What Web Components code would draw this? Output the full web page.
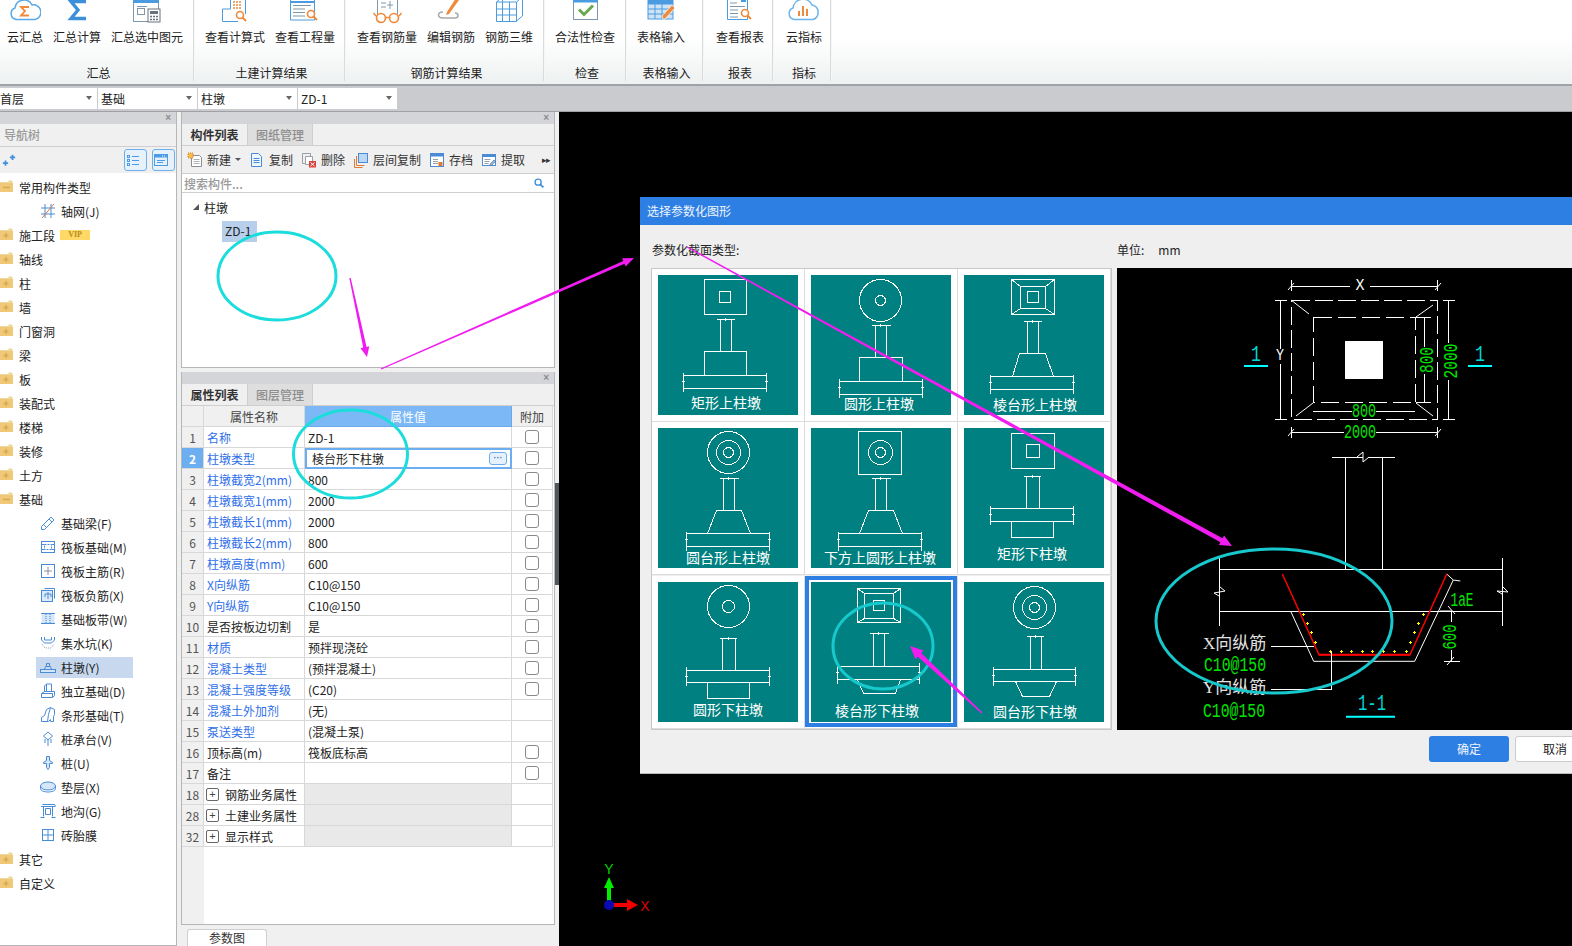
<!DOCTYPE html>
<html lang="zh">
<head>
<meta charset="utf-8">
<title>选择参数化图形</title>
<style>
html, body { margin: 0; height: 100%; overflow: hidden; }
body { background: #f0f0f0; color: #222; font: 12px "Noto Sans CJK SC", sans-serif; }
.main { display: flex; height: 834px; }
.mid { display: flex; flex-direction: column; gap: 4px; width: 374px; margin-left: 4px; }
</style>
</head>
<body>
<app-shell>
  <ribbon-bar>
    <ribbon-group label="汇总" width="195" pad="7">
      <ribbon-button icon="cloudSum" label="云汇总"></ribbon-button>
      <ribbon-button icon="sigma" label="汇总计算"></ribbon-button>
      <ribbon-button icon="winCalc" label="汇总选中图元"></ribbon-button>
    </ribbon-group>
    <ribbon-group label="土建计算结果" width="151" pad="10">
      <ribbon-button icon="formula" label="查看计算式"></ribbon-button>
      <ribbon-button icon="quantity" label="查看工程量"></ribbon-button>
    </ribbon-group>
    <ribbon-group label="钢筋计算结果" width="199" pad="11">
      <ribbon-button icon="glasses" label="查看钢筋量"></ribbon-button>
      <ribbon-button icon="editBar" label="编辑钢筋"></ribbon-button>
      <ribbon-button icon="bar3d" label="钢筋三维"></ribbon-button>
    </ribbon-group>
    <ribbon-group label="检查" width="82" pad="10">
      <ribbon-button icon="check" label="合法性检查"></ribbon-button>
    </ribbon-group>
    <ribbon-group label="表格输入" width="77" pad="10">
      <ribbon-button icon="table" label="表格输入"></ribbon-button>
    </ribbon-group>
    <ribbon-group label="报表" width="70" pad="12">
      <ribbon-button icon="report" label="查看报表"></ribbon-button>
    </ribbon-group>
    <ribbon-group label="指标" width="58" pad="12">
      <ribbon-button icon="cloudBars" label="云指标"></ribbon-button>
    </ribbon-group>
  </ribbon-bar>

  <combo-bar>
    <combo-box width="97" style="--left:0px">首层</combo-box>
    <combo-box width="99">基础</combo-box>
    <combo-box width="99">柱墩</combo-box>
    <combo-box width="99">ZD-1</combo-box>
  </combo-bar>

  <div class="main">
    <nav-panel>
      <tree-row folder="open">常用构件类型</tree-row>
      <tree-row icon="grid">轴网(J)</tree-row>
      <tree-row folder="closed" vip>施工段</tree-row>
      <tree-row folder="closed">轴线</tree-row>
      <tree-row folder="closed">柱</tree-row>
      <tree-row folder="closed">墙</tree-row>
      <tree-row folder="closed">门窗洞</tree-row>
      <tree-row folder="closed">梁</tree-row>
      <tree-row folder="closed">板</tree-row>
      <tree-row folder="closed">装配式</tree-row>
      <tree-row folder="closed">楼梯</tree-row>
      <tree-row folder="closed">装修</tree-row>
      <tree-row folder="closed">土方</tree-row>
      <tree-row folder="open">基础</tree-row>
      <tree-row icon="beam">基础梁(F)</tree-row>
      <tree-row icon="raft">筏板基础(M)</tree-row>
      <tree-row icon="main">筏板主筋(R)</tree-row>
      <tree-row icon="neg">筏板负筋(X)</tree-row>
      <tree-row icon="band">基础板带(W)</tree-row>
      <tree-row icon="pit">集水坑(K)</tree-row>
      <tree-row icon="pier" selected>柱墩(Y)</tree-row>
      <tree-row icon="iso">独立基础(D)</tree-row>
      <tree-row icon="strip">条形基础(T)</tree-row>
      <tree-row icon="cap">桩承台(V)</tree-row>
      <tree-row icon="pile">桩(U)</tree-row>
      <tree-row icon="disc">垫层(X)</tree-row>
      <tree-row icon="trench">地沟(G)</tree-row>
      <tree-row icon="brick">砖胎膜</tree-row>
      <tree-row folder="closed">其它</tree-row>
      <tree-row folder="closed">自定义</tree-row>
    </nav-panel>

    <div class="mid">
      <list-panel></list-panel>
      <prop-panel></prop-panel>
    </div>
    <dock-splitter></dock-splitter>

    <cad-canvas>
      <param-dialog></param-dialog>
    </cad-canvas>
  </div>
  <annot-layer></annot-layer>
</app-shell>

<script>
// small 16px icons for the tree and the list toolbar
const B = '#4a8bd6';
const SMALL = {
  grid: `<path d="M1 5h14M1 11h14M5 1v14M11 1v14" stroke="${B}"/><path d="M2 15L14 1" stroke="#e07a3a"/>`,
  beam: `<path d="M1.5 11.5L11 2l3 3-9.5 9.5h-3z" fill="none" stroke="${B}"/><path d="M3.5 9.5l3 3M9 4l3 3" stroke="${B}"/>`,
  raft: `<rect x="1.5" y="2.5" width="13" height="11" fill="none" stroke="${B}"/><rect x="4.5" y="5.5" width="7" height="5" fill="none" stroke="${B}" stroke-dasharray="2 1"/><path d="M1.5 5.5h3M1.5 10.5h3M11.5 5.5h3M11.5 10.5h3" stroke="${B}"/>`,
  main: `<rect x="1.5" y="1.5" width="13" height="13" fill="none" stroke="${B}"/><path d="M8 4v8M4 8h8" stroke="#8a9099"/>`,
  neg: `<rect x="1.5" y="3.5" width="11" height="11" fill="#dceaf8" stroke="${B}"/><path d="M4.5 1.5h10v10" fill="none" stroke="${B}"/><path d="M5 7h6M5 7v3M8 5v7M11 7v3" stroke="${B}"/>`,
  band: `<rect x="1.5" y="2.5" width="13" height="10" fill="#d5e6f8" stroke="none"/><path d="M1 2.5h14M1 12.5h14" stroke="${B}"/><path d="M6 3v9M10 3v9" stroke="${B}" stroke-dasharray="1 1"/>`,
  pit: `<path d="M1.5 2v3l3 3h7l3-3V2M4.5 2v3h7V2" fill="none" stroke="${B}"/><path d="M2 9l3 4h6l3-4" fill="none" stroke="#9aa3ad" stroke-dasharray="1 1"/>`,
  pier: `<rect x=".5" y="10.5" width="15" height="3" fill="#d5e6f8" stroke="${B}"/><path d="M4.5 10.5l1-3h5l1 3M6.5 7.5v-3h3v3" fill="none" stroke="${B}"/>`,
  iso: `<path d="M1.5 14.5v-4l3-2h10v4l-2 2zM4.5 8.5V3l2-2h5v7.5M6.5 1v7.5M12.5 14.5v-4h-11" fill="none" stroke="${B}"/>`,
  strip: `<path d="M1.5 14.5v-4l3-2 2-6 4-2 4 2v5l-1 2v5h-3v-2l-2 2z" fill="none" stroke="${B}"/><path d="M10.5.5l-2 7-1 7" fill="none" stroke="${B}"/>`,
  cap: `<path d="M8 1l4.5 4-4.5 4-4.5-4zM5 8v4M11 8v4M8 9v6" fill="none" stroke="${B}"/>`,
  pile: `<path d="M6.5 1.5h3v4l3 2v1h-3v4l-1.5 2-1.5-2v-4h-3v-1l3-2z" fill="#d5e6f8" stroke="${B}"/>`,
  disc: `<ellipse cx="8" cy="7" rx="7.5" ry="4" fill="#d5e6f8" stroke="${B}"/><path d="M.5 7v2.5c0 2 3.5 3.5 7.5 3.5s7.5-1.5 7.5-3.5V7" fill="none" stroke="${B}"/>`,
  trench: `<path d="M1 3.5h14M2.5 1.5h12l1 2M3.5 3.5v10M12.5 3.5v10M.5 14.5h4M11.5 14.5h4M5.5 5.5h5v6h-5z" fill="none" stroke="${B}"/>`,
  brick: `<rect x="2.5" y="2.5" width="11" height="11" fill="none" stroke="${B}"/><path d="M8 2.5v11M2.5 8h11" stroke="${B}"/>`,
  fileNew: `<path d="M4.5 3.5h8l2 2v9h-10z" fill="#fff" stroke="#8b8f94"/><path d="M6.5 7.5h6M6.5 9.5h6M6.5 11.5h6" stroke="#aeb2b6"/><rect x="1" y="1" width="5" height="5" fill="#f4c04a" stroke="#e5762d" stroke-dasharray="1 1"/>`,
  fileCopy: `<path d="M2.5 1.5h7l3 3v10h-10z" fill="#eef5fc" stroke="${B}"/><path d="M4.5 6.5h6M4.5 8.5h6M4.5 10.5h6" stroke="${B}"/>`,
  fileDel: `<path d="M1.5 1.5h8v10h-8z" fill="none" stroke="#9aa0a6"/><path d="M4.5 4.5h7v8h-7z" fill="#fff" stroke="#9aa0a6"/><rect x="8" y="9" width="7" height="6.5" fill="#d9413b"/><path d="M9.5 10.5l4 3.5M13.5 10.5l-4 3.5" stroke="#fff"/>`,
  floorCopy: `<rect x="5.5" y="1.5" width="9" height="9" fill="#bcd8f5" stroke="${B}"/><path d="M3.5 4v9.5h8M1.5 7v8.5h8" fill="none" stroke="#e07a3a"/>`,
  store: `<rect x="1.5" y="1.5" width="13" height="13" fill="#fff" stroke="${B}"/><rect x="1.5" y="1.5" width="13" height="3" fill="${B}"/><path d="M4 7.5h5M4 9.5h5M4 11.5h5" stroke="#9aa0a6"/><rect x="9.5" y="10" width="4" height="4" fill="#e5762d"/>`,
  fetch: `<rect x="1.5" y="2.5" width="13" height="11" fill="#fff" stroke="${B}"/><rect x="1.5" y="2.5" width="13" height="2.5" fill="${B}"/><path d="M3.5 7.5h6M3.5 9.5h5M3.5 11.5h4" stroke="#9aa0a6"/><path d="M9 12l4-4 1.5 1.5-4 4H9z" fill="#8fb8e6" stroke="#5b6b7a" stroke-width=".6"/>`,
  search: `<circle cx="7" cy="7" r="3.5" fill="none" stroke="#3c8fd8" stroke-width="1.5"/><path d="M9.5 9.5L13 13" stroke="#3c8fd8" stroke-width="2"/>`,
  list: `<rect x="2.5" y="3.5" width="2" height="2" fill="none" stroke="#4b9be8"/><rect x="2.5" y="7.5" width="2" height="2" fill="none" stroke="#4b9be8"/><rect x="2.5" y="11.5" width="2" height="2" fill="none" stroke="#4b9be8"/><path d="M7 4.5h7M7 8.5h7M7 12.5h7" stroke="#4b9be8"/>`,
  winBox: `<rect x="1.5" y="2.5" width="13" height="11" fill="none" stroke="#4b9be8"/><rect x="1.5" y="2.5" width="13" height="3" fill="#4b9be8"/><path d="M4 8.5h8M4 10.5h6" stroke="#4b9be8"/><path d="M9 4h1M11 4h1" stroke="#fff"/>`,
  wand: `<path d="M1 11.5h6M4 8.5v6" stroke="#3c8fd8" stroke-width="2"/><path d="M9 5h6M12 2v6" stroke="#3c8fd8" stroke-width="2"/>`
};
const small = (name, size = 16) => `<svg width="${size}" height="${size}" viewBox="0 0 16 16" style="display:block;flex:none">${SMALL[name]}</svg>`;

// ribbon icons: 32x24 box whose top is cut off by the window, as in the app
const Or = '#ef8a3c', Bl = '#4b9be0', Gy = '#7f97ac';
const lens = (x, y) => `<circle cx="${x}" cy="${y}" r="3.5" fill="#fff" stroke="${Or}" stroke-width="1.6"/><path d="M${x + 2.5} ${y + 2.5}l3.5 3.5" stroke="${Or}" stroke-width="2"/>`;
const RIBBON = {
  cloudSum: `<path d="M7 19.5a6 6 0 0 1-1-11.5 9 9 0 0 1 17-3 7 7 0 0 1 3 14.5z" fill="none" stroke="#5aa9e6" stroke-width="1.5"/><path d="M20 7h-8l4 4-4 4.5h8" fill="none" stroke="${Or}" stroke-width="1.8"/>`,
  sigma: `<path d="M25 1.5H10l7 8.5-7 8.5h15" fill="none" stroke="#3c8fd8" stroke-width="3.4"/>`,
  winCalc: `<rect x="2.5" y="-3" width="25" height="24.5" fill="#fff" stroke="${Gy}"/><rect x="2" y="0" width="26" height="3" fill="${Bl}"/><rect x="6.5" y="8.5" width="7" height="6" fill="none" stroke="${Gy}"/><path d="M6 6.5h10" stroke="${Gy}"/><rect x="17" y="9" width="12" height="13" fill="#fff" stroke="#6a737b"/><rect x="19" y="11" width="8" height="3" fill="#6a737b"/><path d="M19 16.5h8M19 19.5h8" stroke="#6a737b" stroke-width="1.5" stroke-dasharray="2 1"/>`,
  formula: `<path d="M3.5 21.5V9h8V-3h15v17" fill="none" stroke="${Bl}"/><path d="M3.5 21.5H19" stroke="${Bl}"/><path d="M14 2h9M14 5h9M14 8h9" stroke="${Or}" stroke-dasharray="2 1" stroke-width="1.5"/>${lens(21, 15)}`,
  quantity: `<path d="M1.5-3h24v23h-24z" fill="#fff" stroke="${Bl}"/><path d="M1 2h25" stroke="${Bl}" stroke-width="2"/><path d="M4 5.5h18M4 9h12M4 12.5h12M4 16h12" stroke="${Gy}"/>${lens(22, 14)}`,
  glasses: `<path d="M6.5 14V-3h20v17" fill="none" stroke="${Gy}"/><path d="M10 3h5M10 7h5M19 1v8M16 5h6" stroke="${Gy}"/><circle cx="10" cy="18" r="4.5" fill="#fff" stroke="${Or}" stroke-width="1.7"/><circle cx="23" cy="18" r="4.5" fill="#fff" stroke="${Or}" stroke-width="1.7"/><path d="M14.500 17.5h4M5 16L2.500 13M28 16l2.500-3" stroke="${Or}" stroke-width="1.5"/>`,
  editBar: `<path d="M12 12L21-2l3 2-10 14-3 1z" fill="${Or}"/><path d="M8 12c-6 0-6 6 0 6h12c4 0 4-5 0-5" fill="none" stroke="#a7a9ab" stroke-width="1.5"/>`,
  bar3d: `<path d="M3.5 21.5V2l6-5M3.5 21.5h20V2M3.5 2h20l6-5M9.5-3v19M3.5 9h20M3.5 15h20M9.5 3v18M16.5 2v19M29.5-3V16l-6 5" fill="none" stroke="${Bl}"/>`,
  check: `<rect x="4.5" y="-2" width="24" height="21.5" fill="#fff" stroke="${Gy}"/><rect x="4" y="0" width="25" height="2.5" fill="${Bl}"/><path d="M10 9.5l5 5 9-9" fill="none" stroke="#6aa84f" stroke-width="3"/>`,
  table: `<rect x="3" y="-1" width="25" height="20" fill="#cfe3f7" stroke="${Bl}"/><path d="M3 4h25M3 9h25M3 14h25M10 0v19M17 0v19" stroke="${Bl}"/><rect x="3" y="-1" width="25" height="5" fill="${Bl}"/><path d="M18 19l-1-3L27 5l3 3-10 11z" fill="${Or}" stroke="#fff" stroke-width=".7"/>`,
  report: `<path d="M3.5-3h20v22.5h-20z" fill="#fff" stroke="${Bl}"/><path d="M6 3h7M6 6.500h15M6 10h8M6 13.500h8M6 17h8" stroke="${Gy}"/><rect x="17" y="-3" width="5" height="5" fill="${Bl}"/>${lens(21, 13)}`,
  cloudBars: `<path d="M6 19.5a6 6 0 0 1-1-11.5 10 10 0 0 1 19-3 7.5 7.5 0 0 1 1 14.5z" fill="none" stroke="#6bb5ec" stroke-width="1.5"/><path d="M11 11v5M15 6v10M19 9v7" stroke="${Or}" stroke-width="2"/>`
};

class AppShell extends HTMLElement {
  constructor() {
    super();
    this.attachShadow({ mode: 'open' }).innerHTML = `
      <style>:host{display:block;position:relative;width:1572px;height:946px;overflow:hidden}</style>
      <slot></slot>`;
  }
}

class RibbonBar extends HTMLElement {
  constructor() {
    super();
    this.attachShadow({ mode: 'open' }).innerHTML = `
      <style>
      :host{display:flex;height:84px;background:linear-gradient(#fff 0,#fff 45%,#eef1f1 100%);border-bottom:2px solid #9fa3a7;overflow:hidden}
      </style><slot></slot>`;
  }
}

class RibbonGroup extends HTMLElement {
  connectedCallback() {
    if (this.shadowRoot) return;
    const w = this.getAttribute('width'), pad = this.getAttribute('pad');
    this.attachShadow({ mode: 'open' }).innerHTML = `
      <style>
      :host{display:block;position:relative;box-sizing:border-box;width:${w}px;height:84px;flex:none}
      .btns{display:flex;gap:10px;padding-left:${pad}px}
      .name{position:absolute;left:2px;right:0;top:64px;line-height:17px;text-align:center;color:#222}
      .sep{position:absolute;right:0;top:0;height:81px;width:2px;background:#d9dbdc;border-right:1px solid #f5f6f6;box-sizing:border-box}
      </style>
      <div class="btns"><slot></slot></div>
      <div class="name">${this.getAttribute('label')}</div>
      <div class="sep"></div>`;
  }
}

class RibbonButton extends HTMLElement {
  connectedCallback() {
    if (this.shadowRoot) return;
    this.attachShadow({ mode: 'open' }).innerHTML = `
      <style>
      :host{display:flex;flex-direction:column;align-items:center;white-space:nowrap}
      svg{display:block;overflow:hidden}
      .t{margin-top:5px;line-height:16px;color:#222}
      </style>
      <svg width="32" height="24" viewBox="0 0 32 24">${RIBBON[this.getAttribute('icon')]}</svg>
      <div class="t">${this.getAttribute('label')}</div>`;
  }
}

class ComboBar extends HTMLElement {
  constructor() {
    super();
    this.attachShadow({ mode: 'open' }).innerHTML = `
      <style>
      :host{display:flex;gap:1px;align-items:center;box-sizing:border-box;height:26px;background:#c9cbce;border-bottom:1px solid #9fa1a4;padding-bottom:1px}
      </style><slot></slot>`;
  }
}

class ComboBox extends HTMLElement {
  connectedCallback() {
    if (this.shadowRoot) return;
    this.attachShadow({ mode: 'open' }).innerHTML = `
      <style>
      :host{display:flex;align-items:center;justify-content:space-between;box-sizing:border-box;width:${this.getAttribute('width')}px;height:21px;padding:0 5px 0 var(--left,3px);background:#fff;color:#222}
      i{width:0;height:0;border:3px solid transparent;border-top:4px solid #666;border-bottom:0}
      </style><slot></slot><i></i>`;
  }
}

class DockPanel extends HTMLElement {
  constructor() {
    super();
    this.attachShadow({ mode: 'open' }).innerHTML = `
      <style>
      :host{display:flex;flex-direction:column;box-sizing:border-box;border:1px solid #b4b6b8;border-top:0;background:#fff;min-height:0}
      .bar{display:flex;justify-content:flex-end;align-items:center;flex:none;height:12px;background:#d3d5d8;padding-right:5px;color:#8a8c8f;font:bold 10px/12px "Liberation Sans",sans-serif}
      </style>
      <div class="bar">×</div><slot></slot>`;
  }
}

class TabStrip extends HTMLElement {
  connectedCallback() {
    if (this.shadowRoot) return;
    const tabs = this.getAttribute('items').split(',');
    this.attachShadow({ mode: 'open' }).innerHTML = `
      <style>
      :host{display:flex;flex:none;height:22px;box-sizing:border-box;background:#f0f0f0;border-bottom:1px solid #cfcfcf}
      div{display:flex;align-items:center;justify-content:center;width:64px;height:21px;border-right:1px solid #cfcfcf;background:#dedede;color:#8e8e8e;font-weight:500}
      div.on{background:#f0f0f0;color:#333;width:65px;font-weight:700}
      </style>
      ${tabs.map((t, i) => `<div class="${i ? '' : 'on'}">${t}</div>`).join('')}`;
  }
}

class TreeRow extends HTMLElement {
  connectedCallback() {
    if (this.shadowRoot) return;
    const folder = this.getAttribute('folder');
    const mark = folder === 'open'
      ? `<path d="M3 7.5h7" stroke="#d9a94e" stroke-width="1.5"/>`
      : `<path d="M3.5 7.5h5M6 5v5" stroke="#d9a94e" stroke-width="1.5"/>`;
    const icon = folder
      ? `<svg width="14" height="14" viewBox="0 0 14 14" style="display:block;flex:none"><path d="M0 2h8l1-1.5h3.500V12H0z" fill="#f1d79c"/><rect x="0" y="3" width="13" height="9" fill="#efc878"/>${mark}</svg>`
      : small(this.getAttribute('icon'));
    const vip = this.hasAttribute('vip') ? '<span class="vip">VIP</span>' : '';
    this.attachShadow({ mode: 'open' }).innerHTML = `
      <style>
      :host{display:flex;align-items:center;height:24px;white-space:nowrap;color:#222}
      .in{display:flex;align-items:center;gap:5px;height:21px;box-sizing:border-box}
      :host([icon]) .in{margin-left:36px;padding-left:4px;width:97px}
      :host([selected]) .in{background:#c7d8ef}
      .vip{width:30px;height:10px;background:#ffd966;color:#b68a1e;font:bold 8px/10px "Liberation Serif",serif;text-align:center}
      </style>
      <div class="in">${icon}<slot></slot>${vip}</div>`;
  }
}

class NavPanel extends HTMLElement {
  constructor() {
    super();
    this.attachShadow({ mode: 'open' }).innerHTML = `
      <style>
      :host{display:block;flex:none;width:177px}
      dock-panel{height:100%;border-left:0}
      .head{flex:none;height:22px;line-height:21px;padding-left:4px;color:#9a9a9a;background:#f0f0f0;border-bottom:1px solid #cfcfcf;font-weight:500}
      .tools{display:flex;align-items:center;gap:5px;flex:none;height:26px;box-sizing:border-box;padding:0 1px 0 2px;background:#f0f0f0}
      .tools svg:first-child{margin-right:auto}
      .tb{width:21px;height:20px;border:1px solid #6cb0ee;border-radius:3px;background:#e6f1fb;display:flex;align-items:center;justify-content:center;box-sizing:content-box}
      .tree{padding-top:2px;overflow:hidden;flex:1}
      </style>
      <dock-panel>
        <div class="head">导航树</div>
        <div class="tools">${small('wand', 14)}<span class="tb">${small('list')}</span><span class="tb">${small('winBox')}</span></div>
        <div class="tree"><slot></slot></div>
      </dock-panel>`;
  }
}

class ToolButton extends HTMLElement {
  connectedCallback() {
    if (this.shadowRoot) return;
    const arrow = this.hasAttribute('menu') ? '<i></i>' : '';
    this.attachShadow({ mode: 'open' }).innerHTML = `
      <style>
      :host{display:flex;align-items:center;gap:4px;white-space:nowrap;color:#333}
      i{width:0;height:0;border:3px solid transparent;border-top:3px solid #555;border-bottom:0}
      </style>${small(this.getAttribute('icon'))}<slot></slot>${arrow}`;
  }
}

class ListPanel extends HTMLElement {
  constructor() {
    super();
    this.attachShadow({ mode: 'open' }).innerHTML = `
      <style>
      :host{display:block;flex:none;height:256px}
      dock-panel{height:100%}
      .tools{display:flex;align-items:center;gap:8px;flex:none;height:28px;box-sizing:border-box;padding-left:5px;background:#f0f0f0;border-bottom:1px solid #cfcfcf;position:relative}
      .more{position:absolute;right:4px;top:9px;font:9px/10px "Liberation Sans",sans-serif;color:#333;letter-spacing:-1px}
      .search{display:flex;align-items:center;justify-content:space-between;flex:none;height:19px;box-sizing:border-box;padding:0 8px 0 2px;color:#9a9a9a;border-bottom:1px solid #cfcfcf;font-weight:500}
      .tree{position:relative;flex:1;padding:5px 0 0 11px}
      .row{display:flex;align-items:center;gap:5px;height:18px}
      .row i{width:0;height:0;border-style:solid;border-width:0 0 6px 6px;border-color:transparent transparent #555 transparent}
      .sel{display:block;margin:5px 0 0 29px;width:35px;height:21px;line-height:20px;text-indent:3px;background:#b8cfec}
      </style>
      <dock-panel>
        <tab-strip items="构件列表,图纸管理"></tab-strip>
        <div class="tools">
          <tool-button icon="fileNew" menu>新建</tool-button>
          <tool-button icon="fileCopy">复制</tool-button>
          <tool-button icon="fileDel">删除</tool-button>
          <tool-button icon="floorCopy">层间复制</tool-button>
          <tool-button icon="store">存档</tool-button>
          <tool-button icon="fetch">提取</tool-button>
          <span class="more">▸▸</span>
        </div>
        <div class="search"><span>搜索构件...</span>${small('search', 14)}</div>
        <div class="tree">
          <div class="row"><i></i><span>柱墩</span></div>
          <span class="sel">ZD-1</span>
        </div>
      </dock-panel>`;
  }
}

const PROPS = [
  [1, '名称', 'ZD-1', 1, 1],
  [2, '柱墩类型', '棱台形下柱墩', 1, 1],
  [3, '柱墩截宽2(mm)', '800', 1, 1],
  [4, '柱墩截宽1(mm)', '2000', 1, 1],
  [5, '柱墩截长1(mm)', '2000', 1, 1],
  [6, '柱墩截长2(mm)', '800', 1, 1],
  [7, '柱墩高度(mm)', '600', 1, 1],
  [8, 'X向纵筋', 'C10@150', 1, 1],
  [9, 'Y向纵筋', 'C10@150', 1, 1],
  [10, '是否按板边切割', '是', 0, 1],
  [11, '材质', '预拌现浇砼', 1, 1],
  [12, '混凝土类型', '(预拌混凝土)', 1, 1],
  [13, '混凝土强度等级', '(C20)', 1, 1],
  [14, '混凝土外加剂', '(无)', 1, 0],
  [15, '泵送类型', '(混凝土泵)', 1, 0],
  [16, '顶标高(m)', '筏板底标高', 0, 1],
  [17, '备注', '', 0, 1]
];
const GROUPS = [[18, '钢筋业务属性'], [28, '土建业务属性'], [32, '显示样式']];

class PropPanel extends HTMLElement {
  constructor() {
    super();
    const row = ([n, name, val, link, chk]) => `
      <div class="c no ${n === 2 ? 'cur' : ''}">${n}</div>
      <div class="c nm ${link ? 'link' : ''}">${name}</div>
      <div class="c val ${n === 2 ? 'edit' : ''}"><span>${val}</span>${n === 2 ? '<b>···</b>' : ''}</div>
      <div class="c add">${chk ? '<u></u>' : ''}</div>`;
    const group = ([n, name]) => `
      <div class="c no">${n}</div>
      <div class="c nm grp"><em>+</em>${name}</div>
      <div class="c val fill"></div>
      <div class="c add"></div>`;
    this.attachShadow({ mode: 'open' }).innerHTML = `
      <style>
      :host{display:flex;flex-direction:column;flex:none;height:574px}
      dock-panel{height:553px;flex:none}
      .body{flex:1;background:linear-gradient(90deg,#f0f0f0 22px,#fff 22px)}
      .grid{display:grid;grid-template-columns:22px 101px 207px 41px;grid-auto-rows:21px}
      .c{box-sizing:border-box;display:flex;align-items:center;border-right:1px solid #d8d8d8;border-bottom:1px solid #d8d8d8;background:#fff;white-space:nowrap;padding-left:3px;color:#222}
      .h{justify-content:center;padding:0;background:#f0f0f0;color:#444}
      .h.v{background:#7cb8f6;color:#fff;border-color:#6aa8ea}
      .no{justify-content:center;padding:0;background:#f0f0f0;color:#555}
      .no.cur{background:#6daef0;color:#fff;font-weight:700}
      .link{color:#2f6fe8}
      .edit{border:2px solid #6daef0;padding-left:5px;justify-content:space-between;padding-right:3px}
      .edit b{display:block;width:16px;height:11px;border:1px solid #6daef0;border-radius:3px;background:#e6f1fb;color:#3f7fc8;font:bold 9px/10px "Liberation Sans",sans-serif;text-align:center}
      .add{justify-content:center;padding:0}
      u{display:block;width:12px;height:12px;border:1px solid #8a8a8a;border-radius:3px;text-decoration:none}
      .grp{padding-left:2px}
      em{display:block;width:11px;height:11px;border:1px solid #666;border-radius:2px;margin-right:6px;font:normal 11px/10px "Liberation Sans",sans-serif;text-align:center;color:#444}
      .fill{background:#e9e9e9}
      .tabs{flex:none;padding:4px 0 0 6px}
      .tabs div{width:80px;height:17px;box-sizing:border-box;border:1px solid #cfcfcf;border-bottom:0;border-radius:3px 3px 0 0;background:#fff;text-align:center;line-height:16px;color:#333}
      </style>
      <dock-panel>
        <tab-strip items="属性列表,图层管理"></tab-strip>
        <div class="body"><div class="grid">
          <div class="c h"></div><div class="c h">属性名称</div><div class="c h v">属性值</div><div class="c h">附加</div>
          ${PROPS.map(row).join('')}${GROUPS.map(group).join('')}
        </div></div>
      </dock-panel>
      <div class="tabs"><div>参数图</div></div>`;
  }
}

class DockSplitter extends HTMLElement {
  constructor() {
    super();
    this.attachShadow({ mode: 'open' }).innerHTML = `
      <style>
      :host{display:flex;flex:none;width:4px;padding-top:371px;box-sizing:border-box}
      div{width:4px;height:102px;background:#50565c}
      </style><div></div>`;
  }
}

class CadCanvas extends HTMLElement {
  constructor() {
    super();
    this.attachShadow({ mode: 'open' }).innerHTML = `
      <style>
      :host{display:block;position:relative;flex:1;min-width:0;background:#000;overflow:hidden}
      svg{position:absolute;left:30px;top:745px}
      ::slotted(*){position:absolute;left:81px;top:85px}
      </style>
      <svg width="70" height="60" viewBox="0 0 70 60">
        <path d="M18 28h4v20h-4z" fill="#00f000"/><path d="M20 20l5 11H15z" fill="#00f000"/>
        <path d="M20 46h24v4H20z" fill="#f00000"/><path d="M38 42l11 6-11 6z" fill="#f00000"/>
        <circle cx="20" cy="48" r="5" fill="#0a0ab4"/>
        <text x="20" y="17" text-anchor="middle" font-family="Liberation Sans" font-size="14" fill="#00d000">Y</text>
        <text x="56" y="54" text-anchor="middle" font-family="Liberation Sans" font-size="14" fill="#e00000">X</text>
      </svg>
      <slot></slot>`;
  }
}

// teal tiles: measured in tile pixels
const TILES = [
  { label: '矩形上柱墩', lx: 68, ly: 127, rects: [[46, 88, 4, 39], [61, 72, 16, 27]], col: [44, 58, 76, 62, 73, 76], base: [46, 88, 46, 88, 76, 100], slab: [100, 113, 25, 108, 97, 116] },
  { label: '圆形上柱墩', lx: 68, ly: 128, circles: [[69, 25, 21], [69, 25, 5]], col: [50, 60, 79, 64, 75, 82], base: [48, 91, 48, 91, 82, 106], slab: [106, 119, 28, 111, 103, 122] },
  { label: '棱台形上柱墩', lx: 71, ly: 129, rects: [[47, 90, 4, 39], [56, 81, 11, 33], [63, 74, 16, 27]], diag: 1, col: [46, 59, 77, 63, 74, 78], base: [55, 81, 48, 89, 78, 101], slab: [101, 114, 26, 109, 99, 118] },
  { label: '圆台形上柱墩', lx: 70, ly: 129, circles: [[70, 24, 21], [70, 24, 12], [70, 24, 5]], col: [50, 61, 80, 65, 76, 82], base: [58, 83, 49, 92, 82, 105], slab: [105, 118, 28, 111, 103, 122] },
  { label: '下方上圆形上柱墩', lx: 69, ly: 129, rects: [[47, 90, 3, 46]], circles: [[69, 24, 12], [69, 24, 5]], col: [50, 60, 79, 64, 75, 82], base: [57, 82, 48, 91, 82, 105], slab: [105, 118, 27, 110, 103, 122] },
  { label: '矩形下柱墩', lx: 68, ly: 125, rects: [[47, 90, 5, 40], [62, 75, 16, 29]], col: [48, 59, 76, 62, 75, 80], slab: [80, 93, 26, 109, 77, 96], base: [47, 89, 47, 89, 93, 109] },
  { label: '圆形下柱墩', lx: 70, ly: 127, circles: [[70, 24, 21], [70, 24, 6]], col: [56, 61, 78, 64, 77, 88], slab: [88, 100, 28, 111, 84, 103], base: [49, 91, 49, 91, 100, 116] },
  { label: '棱台形下柱墩', lx: 66, ly: 128, rects: [[46, 89, 6, 40], [53, 82, 11, 36], [62, 73, 18, 28]], diag: 1, col: [51, 58, 77, 62, 73, 84], slab: [84, 97, 26, 108, 80, 101], base: [46, 89, 52, 84, 97, 111], selected: 1 },
  { label: '圆台形下柱墩', lx: 71, ly: 129, circles: [[70, 25, 21], [70, 25, 12], [70, 25, 5]], col: [54, 62, 79, 66, 77, 87], slab: [87, 99, 29, 111, 84, 103], base: [51, 92, 58, 85, 99, 114] }
];

function tileShapes(t) {
  const p = v => v + .5;
  let d = '', out = '';
  (t.rects || []).forEach(([x0, x1, y0, y1]) => { d += `M${p(x0)} ${p(y0)}H${p(x1)}V${p(y1)}H${p(x0)}Z`; });
  (t.circles || []).forEach(([cx, cy, r]) => { out += `<circle cx="${p(cx)}" cy="${p(cy)}" r="${r}"/>`; });
  if (t.diag) {
    const a = t.rects[0], b = t.rects[1];
    d += `M${p(a[0])} ${p(a[2])}L${p(b[0])} ${p(b[2])}M${p(a[1])} ${p(a[2])}L${p(b[1])} ${p(b[2])}M${p(a[0])} ${p(a[3])}L${p(b[0])} ${p(b[3])}M${p(a[1])} ${p(a[3])}L${p(b[1])} ${p(b[3])}`;
  }
  const [y, x0, x1, c0, c1, yb] = t.col;
  d += `M${p(x0)} ${p(y)}H${p(x1)}M${p(c0)} ${p(y)}V${p(yb)}M${p(c1)} ${p(y)}V${p(yb)}M${p((c0 + c1) >> 1)} ${y - 1}v3`;
  const [s0, s1, sx0, sx1, v0, v1] = t.slab;
  const m = (s0 + s1) >> 1;
  d += `M${p(sx0)} ${p(s0)}H${p(sx1)}M${p(sx0)} ${p(s1)}H${p(sx1)}M${p(sx0)} ${p(v0)}V${p(v1)}M${p(sx1)} ${p(v0)}V${p(v1)}M${sx0 - 1} ${p(m)}h3M${sx1 - 1} ${p(m)}h3`;
  const [t0, t1, b0, b1, by0, by1] = t.base;
  d += `M${p(t0)} ${p(by0)}L${p(b0)} ${p(by1)}H${p(b1)}L${p(t1)} ${p(by0)}Z`;
  return `<path d="${d}"/>${out}`;
}

class ParamTile extends HTMLElement {
  connectedCallback() {
    if (this.shadowRoot) return;
    const t = TILES[+this.getAttribute('index')];
    this.attachShadow({ mode: 'open' }).innerHTML = `
      <style>
      :host{display:block;position:relative;box-sizing:border-box;width:153px;height:153px;padding:6px 0 0 6px;background:#fff;border-right:1px solid #dcdcdc;border-bottom:1px solid #dcdcdc}
      .mark{position:absolute;left:0;top:0;width:152px;height:151px;box-sizing:border-box;border:4px solid #2e7fe3}
      svg{display:block;background:#008080}
      g{fill:none;stroke:#fff;stroke-width:1;shape-rendering:crispEdges}
      text{fill:#fff;font:14px "Noto Sans CJK SC",sans-serif;text-anchor:middle;dominant-baseline:central}
      </style>
      <svg width="140" height="140" viewBox="0 0 140 140"><g>${tileShapes(t)}</g><text x="${t.lx}" y="${t.ly}">${t.label}</text></svg>
      ${t.selected ? '<div class="mark"></div>' : ''}`;
  }
}

class SectionPreview extends HTMLElement {
  constructor() {
    super();
    const dots = [[1303, 614], [1307, 623], [1311, 632], [1315, 642], [1330, 651], [1341, 651], [1351, 651], [1362, 651], [1372, 651], [1383, 651], [1394, 651], [1406, 651], [1410, 642], [1414, 632], [1418, 623], [1423, 614]]
      .map(([x, y]) => `M${x - 1} ${y + .5}h3M${x + .5} ${y - 1}v3`).join('');
    const mono = (x, y, s, len, cls, rot) => `<text class="${cls}" x="${x}" y="${y}" textLength="${len}" lengthAdjust="spacingAndGlyphs" ${rot ? `transform="rotate(-90 ${x} ${y})"` : ''}>${s}</text>`;
    this.attachShadow({ mode: 'open' }).innerHTML = `
      <style>
      :host{display:block;flex:none;width:470px;height:462px;background:#000}
      svg{display:block}
      .w{fill:none;stroke:#fff;stroke-width:1;shape-rendering:crispEdges}
      .s{fill:none;stroke:#fff;stroke-width:1}
      .g,.c,.t{font-family:"Liberation Mono",monospace;text-anchor:middle;dominant-baseline:central}
      .g{fill:#00e600;font-size:20px}
      .c{fill:#00d8d8;font-size:22px}
      .t{fill:#fff;font-size:16px}
      .cn{fill:#e2e2e2;font:17px "Liberation Serif","Noto Sans CJK SC",serif;dominant-baseline:central}
      </style>
      <svg width="470" height="462" viewBox="1117 268 470 462">
        <path class="w" stroke-dasharray="18 5" d="M1291.5 300.500H1437.5V419.5H1291.5Z"/>
        <path class="w" stroke-dasharray="18 6" d="M1313.5 317.5H1415.5V402.5H1313.5Z"/>
        <rect x="1345" y="341" width="38" height="38" fill="#fff"/>
        <path class="s" d="M1291 300l18 14M1433 305l-17 12M1313 403l-17 13M1416 403l17 13"/>
        <path class="w" d="M1291.5 286.5H1350M1370 286.5H1437.5M1291.5 280v11M1437.5 280v11"/>
        <path class="s" d="M1288 290l6-7M1435 290l6-7M1288 436l6-7M1435 436l6-7"/>
        ${mono(1360, 286, 'X', 9, 't')}
        <path class="w" d="M1280.5 300V349M1280.5 364V419M1275 300.5h12M1275 419.5h12"/>
        ${mono(1280, 356, 'Y', 8, 't')}
        <path class="w" d="M1448.5 300V343M1448.5 380V419M1443 300.5h12M1443 419.5h12"/>
        ${mono(1451, 361, '2000', 35, 'g', 1)}
        <path class="w" d="M1424.5 317V347M1424.5 374V403M1416 317.5h15M1416 402.5h15"/>
        ${mono(1427, 360, '800', 26, 'g', 1)}
        <path class="w" d="M1313 411.5H1352M1376 411.5H1415"/>
        ${mono(1364, 411, '800', 24, 'g')}
        <path class="w" d="M1291 432.5H1344M1376 432.5H1438M1291.5 427v11M1437.5 427v11"/>
        ${mono(1360, 432, '2000', 32, 'g')}
        ${mono(1256, 355, '1', 10, 'c')}
        ${mono(1480, 355, '1', 10, 'c')}
        <path d="M1244 366h24M1468 366h24M1346 716.7h49" stroke="#00ffff" stroke-width="2"/>

        <path class="w" d="M1332 457.5H1395M1345.5 457V569M1382.5 457V569"/>
        <path d="M1357 457l6-5v10l6-5" fill="#000" stroke="#fff"/>
        <path class="w" d="M1219 569.5H1503M1219 611.5H1503M1219.5 558V626M1502.5 558V626"/>
        <path class="s" d="M1214 593l11-2-5-4M1497 591l11 1-5-5M1214 593l5 3M1497 591l5 3"/>
        <path class="s" d="M1290.7 611.3L1313.7 661.3H1414.7L1453.3 580M1446.7 574l6.6 6 7 1"/>
        <path d="M1282.3 574L1319 654.7H1410L1446.7 574" fill="none" stroke="#ff0000" stroke-width="1.5"/>
        <path d="M1319 654.7H1410" stroke="#ff0000" stroke-width="2"/>
        <path d="${dots}" fill="none" stroke="#ffff00" stroke-width="1" shape-rendering="crispEdges"/>
        ${mono(1462, 600, '1aE', 23, 'g')}
        <path class="w" d="M1451.5 611V622M1451.5 650V661M1444 661.5h16"/>
        <path class="s" d="M1440 611h12M1448 606l7 8M1447 665l7-8"/>
        ${mono(1450, 637, '600', 25, 'g', 1)}
        <text class="cn" x="1203" y="643">X向纵筋</text>
        <text class="cn" x="1203" y="687">Y向纵筋</text>
        ${mono(1235, 665, 'C10@150', 62, 'g')}
        ${mono(1234, 711, 'C10@150', 62, 'g')}
        <path class="w" d="M1271 646.5H1314M1271 689.5H1331.5V651"/>
        ${mono(1372, 704, '1-1', 28, 'c')}
      </svg>`;
  }
}

class ParamDialog extends HTMLElement {
  constructor() {
    super();
    this.attachShadow({ mode: 'open' }).innerHTML = `
      <style>
      :host{display:flex;flex-direction:column;width:960px;height:576px;background:#efefef;box-shadow:0 1px 0 #bbb}
      .title{flex:none;height:28px;line-height:28px;padding-left:7px;background:#2e7fe3;color:#eef5fd}
      .labels{display:flex;flex:none;height:43px;align-items:center;padding:6px 0 0 12px;box-sizing:border-box;color:#222}
      .labels span:first-child{width:465px}
      .labels b{font-weight:400;margin-left:14px}
      .content{display:flex;flex:none;gap:5px;padding-left:11px}
      .grid{display:grid;grid-template-columns:repeat(3,153px);flex:none;border:1px solid #c8c8c8}
      .foot{display:flex;gap:6px;padding:6px 0 0 789px}
      .btn{width:80px;height:26px;box-sizing:border-box;border-radius:3px;text-align:center;line-height:26px}
      .ok{background:#2e7fe3;color:#eef5fd}
      .no{background:#fff;border:1px solid #ccc;line-height:24px;color:#222}
      </style>
      <div class="title">选择参数化图形</div>
      <div class="labels"><span>参数化截面类型:</span><span>单位:<b>mm</b></span></div>
      <div class="content">
        <div class="grid">${TILES.map((t, i) => `<param-tile index="${i}"></param-tile>`).join('')}</div>
        <section-preview></section-preview>
      </div>
      <div class="foot"><div class="btn ok">确定</div><div class="btn no">取消</div></div>`;
  }
}

// the hand-drawn notes on top of the screenshot: arrows start thin and thicken to the head
function taper(x1, y1, x2, y2, w, hl, hw) {
  const len = Math.hypot(x2 - x1, y2 - y1), ux = (x2 - x1) / len, uy = (y2 - y1) / len;
  const nx = -uy, ny = ux, bx = x2 - ux * hl, by = y2 - uy * hl, s = .7;
  const pt = (x, y) => `${x.toFixed(1)},${y.toFixed(1)}`;
  return [pt(x1 - nx * s, y1 - ny * s), pt(x1 + nx * s, y1 + ny * s), pt(bx + nx * w / 2, by + ny * w / 2), pt(bx + nx * hw / 2, by + ny * hw / 2), pt(x2, y2),
    pt(bx - nx * hw / 2, by - ny * hw / 2), pt(bx - nx * w / 2, by - ny * w / 2)].join(' ');
}

class AnnotLayer extends HTMLElement {
  constructor() {
    super();
    const arrows = [
      [350, 278, 367, 357, 3.5, 10, 9],
      [381, 369, 634, 258, 3, 11, 9],
      [687, 247, 1232, 546, 4.5, 12, 11],
      [982, 713, 910, 646, 5, 13, 12]
    ];
    this.attachShadow({ mode: 'open' }).innerHTML = `
      <style>
      :host{position:absolute;left:0;top:0;width:1572px;height:946px;pointer-events:none}
      svg{display:block}
      ellipse{fill:none;stroke-width:3}
      polygon{fill:#f01cf0}
      </style>
      <svg width="1572" height="946" viewBox="0 0 1572 946">
        <ellipse cx="277" cy="276" rx="59" ry="44" stroke="#1cdcdc"/>
        <ellipse cx="350.5" cy="454" rx="57" ry="44" stroke="#1cdcdc"/>
        <ellipse cx="1274" cy="621" rx="118" ry="72" stroke="#17c8cc"/>
        <ellipse cx="883" cy="646" rx="50" ry="43" stroke="#17c8cc"/>
        ${arrows.map(a => `<polygon points="${taper(...a)}"/>`).join('')}
      </svg>`;
  }
}

customElements.define('dock-panel', DockPanel);
customElements.define('tab-strip', TabStrip);
customElements.define('tool-button', ToolButton);
customElements.define('param-tile', ParamTile);
customElements.define('section-preview', SectionPreview);
customElements.define('app-shell', AppShell);
customElements.define('ribbon-bar', RibbonBar);
customElements.define('ribbon-group', RibbonGroup);
customElements.define('ribbon-button', RibbonButton);
customElements.define('combo-bar', ComboBar);
customElements.define('combo-box', ComboBox);
customElements.define('tree-row', TreeRow);
customElements.define('nav-panel', NavPanel);
customElements.define('list-panel', ListPanel);
customElements.define('prop-panel', PropPanel);
customElements.define('dock-splitter', DockSplitter);
customElements.define('cad-canvas', CadCanvas);
customElements.define('param-dialog', ParamDialog);
customElements.define('annot-layer', AnnotLayer);
</script>
</body>
</html>
